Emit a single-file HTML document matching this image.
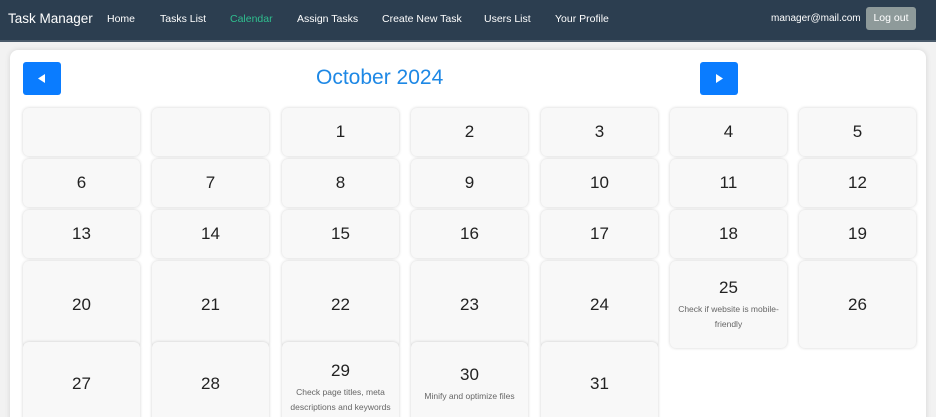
<!DOCTYPE html>
<html><head><meta charset="utf-8"><style>
*{box-sizing:border-box;margin:0;padding:0}
html,body{width:936px;height:417px;overflow:hidden}
body{background:#f2f2f2;font-family:"Liberation Sans",Arial,sans-serif;position:relative}
.nav{position:absolute;left:0;top:0;width:936px;height:42px;background:#2c3e50;border-bottom:2px solid #4a5a6a;color:#fff}
.nav span{position:absolute;top:13px;font-size:10.5px;white-space:nowrap}
.brand{left:8px;font-size:13.5px!important;top:11px!important}
.logout{position:absolute;left:866px;top:7px;width:50px;height:23px;background:#8e9a9a;border-radius:3px;color:#fff;font-size:10.5px;text-align:center;line-height:23px}
.card{position:absolute;left:10px;top:50px;width:916px;height:380px;background:#fff;border-radius:8px;box-shadow:0 0 6px rgba(0,0,0,.12)}
.btn{position:absolute;top:62px;width:38px;height:33px;background:#0a7cff;border-radius:3px}
.title{position:absolute;left:316px;top:66px;font-size:21px;color:#1e88e5}
.c{position:absolute;width:117px;background:#f8f8f8;border-radius:6px;box-shadow:0 0 3px rgba(0,0,0,.18);display:flex;flex-direction:column;align-items:center;justify-content:center;color:#222;font-size:17px;text-align:center}
.c small{font-size:8.5px;color:#666;line-height:15px;margin-top:4px;padding:0 6px}
</style></head><body>
<div class="nav">
<span class="brand">Task Manager</span>
<span style="left:107px">Home</span>
<span style="left:160px">Tasks List</span>
<span style="left:230px;color:#2fbf8f">Calendar</span>
<span style="left:297px">Assign Tasks</span>
<span style="left:382px">Create New Task</span>
<span style="left:484px">Users List</span>
<span style="left:555px">Your Profile</span>
<span style="left:771px;font-size:10px">manager@mail.com</span>
<div class="logout">Log out</div>
</div>
<div class="card"></div>
<div class="btn" style="left:23px"><svg width="38" height="33"><polygon points="15,16.5 22,12 22,21" fill="#fff"/></svg></div>
<div class="title">October 2024</div>
<div class="btn" style="left:700px"><svg width="38" height="33"><polygon points="23,16.5 16,12 16,21" fill="#fff"/></svg></div>

<div class="c" style="left:23px;top:108px;height:48px"></div>
<div class="c" style="left:152px;top:108px;height:48px"></div>
<div class="c" style="left:282px;top:108px;height:48px">1</div>
<div class="c" style="left:411px;top:108px;height:48px">2</div>
<div class="c" style="left:541px;top:108px;height:48px">3</div>
<div class="c" style="left:670px;top:108px;height:48px">4</div>
<div class="c" style="left:799px;top:108px;height:48px">5</div>

<div class="c" style="left:23px;top:159px;height:48px">6</div>
<div class="c" style="left:152px;top:159px;height:48px">7</div>
<div class="c" style="left:282px;top:159px;height:48px">8</div>
<div class="c" style="left:411px;top:159px;height:48px">9</div>
<div class="c" style="left:541px;top:159px;height:48px">10</div>
<div class="c" style="left:670px;top:159px;height:48px">11</div>
<div class="c" style="left:799px;top:159px;height:48px">12</div>

<div class="c" style="left:23px;top:210px;height:48px">13</div>
<div class="c" style="left:152px;top:210px;height:48px">14</div>
<div class="c" style="left:282px;top:210px;height:48px">15</div>
<div class="c" style="left:411px;top:210px;height:48px">16</div>
<div class="c" style="left:541px;top:210px;height:48px">17</div>
<div class="c" style="left:670px;top:210px;height:48px">18</div>
<div class="c" style="left:799px;top:210px;height:48px">19</div>

<div class="c" style="left:23px;top:261px;height:87px">20</div>
<div class="c" style="left:152px;top:261px;height:87px">21</div>
<div class="c" style="left:282px;top:261px;height:87px">22</div>
<div class="c" style="left:411px;top:261px;height:87px">23</div>
<div class="c" style="left:541px;top:261px;height:87px">24</div>
<div class="c" style="left:670px;top:261px;height:87px">25<small>Check if website is mobile-friendly</small></div>
<div class="c" style="left:799px;top:261px;height:87px">26</div>

<div class="c" style="left:23px;top:342px;height:84px">27</div>
<div class="c" style="left:152px;top:342px;height:84px">28</div>
<div class="c" style="left:282px;top:342px;height:84px;padding-top:8px">29<small>Check page titles, meta descriptions and keywords</small></div>
<div class="c" style="left:411px;top:342px;height:84px">30<small>Minify and optimize files</small></div>
<div class="c" style="left:541px;top:342px;height:84px">31</div>
</body></html>
